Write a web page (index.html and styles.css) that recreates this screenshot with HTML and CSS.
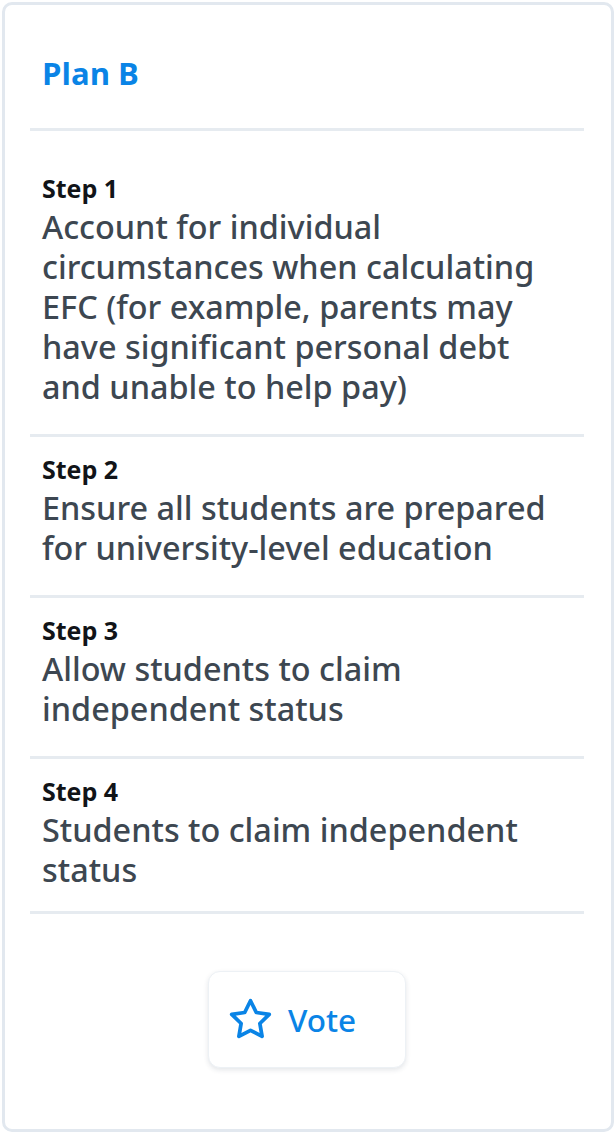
FILE: index.html
```html
<!DOCTYPE html>
<html lang="en">
<head>
<meta charset="utf-8">
<title>Plan B</title>
<link rel="stylesheet" href="styles.css">
</head>
<body>
<div class="card">
  <div class="header">
    <h2 class="title">Plan B</h2>
  </div>
  <ol class="steps">
    <li class="step">
      <div class="label">Step 1</div>
      <div class="text">Account for individual circumstances when calculating EFC (for example, parents may have significant personal debt and unable to help pay)</div>
    </li>
    <li class="step">
      <div class="label">Step 2</div>
      <div class="text">Ensure all students are prepared for university-level education</div>
    </li>
    <li class="step">
      <div class="label">Step 3</div>
      <div class="text">Allow students to claim independent status</div>
    </li>
    <li class="step">
      <div class="label">Step 4</div>
      <div class="text">Students to claim independent status</div>
    </li>
  </ol>
  <div class="actions">
    <button class="vote" type="button">
      <svg class="star" width="45" height="45" viewBox="0 0 24 24" fill="none" stroke="currentColor" stroke-width="2" stroke-linecap="round" stroke-linejoin="round"><polygon points="12 2 15.09 8.26 22 9.27 17 14.14 18.18 21.02 12 17.77 5.82 21.02 7 14.14 2 9.27 8.91 8.26 12 2"/></svg>
      <span>Vote</span>
    </button>
  </div>
</div>
</body>
</html>
```

FILE: styles.css
```css
* { box-sizing: border-box; }
html, body {
  margin: 0;
  padding: 0;
  background: #ffffff;
}
body {
  font-family: "Open Sans", "Noto Sans", sans-serif;
}
.card {
  margin: 2px;
  height: 1130px;
  border: 3px solid #e2e8ef;
  border-radius: 10px;
  padding: 0 27px 0 25px;
  background: #fff;
}
.header {
  padding: 48px 12px 35px;
  border-bottom: 3px solid #e6ebf0;
}
.title {
  margin: 0;
  font-size: 31px;
  line-height: 40px;
  font-weight: 700;
  color: #0a84e6;
}
.steps {
  list-style: none;
  margin: 0;
  padding: 25px 0 0;
}
.step {
  padding: 16px 12px 28px;
  border-bottom: 3px solid #e6ebf0;
}
.step:last-child {
  padding-bottom: 22px;
}
.label {
  font-size: 25px;
  line-height: 32px;
  font-weight: 700;
  color: #111418;
  margin-bottom: 2px;
}
.text {
  font-family: "Noto Sans", "Open Sans", sans-serif;
  font-size: 32.4px;
  line-height: 40px;
  font-weight: 500;
  color: #3d4751;
}
.actions {
  display: flex;
  justify-content: center;
  padding-top: 57px;
}
.vote {
  display: flex;
  align-items: center;
  gap: 15px;
  width: 198px;
  height: 97px;
  padding: 0 0 0 19px;
  border: 1px solid #edf1f5;
  border-radius: 12px;
  background: #fff;
  box-shadow: 0 2px 5px rgba(30, 50, 70, 0.12);
  color: #0a84e6;
  font-family: "Noto Sans", "Open Sans", sans-serif;
  font-size: 31.5px;
  font-weight: 500;
  cursor: pointer;
}
.star {
  flex: none;
  display: block;
}
```
